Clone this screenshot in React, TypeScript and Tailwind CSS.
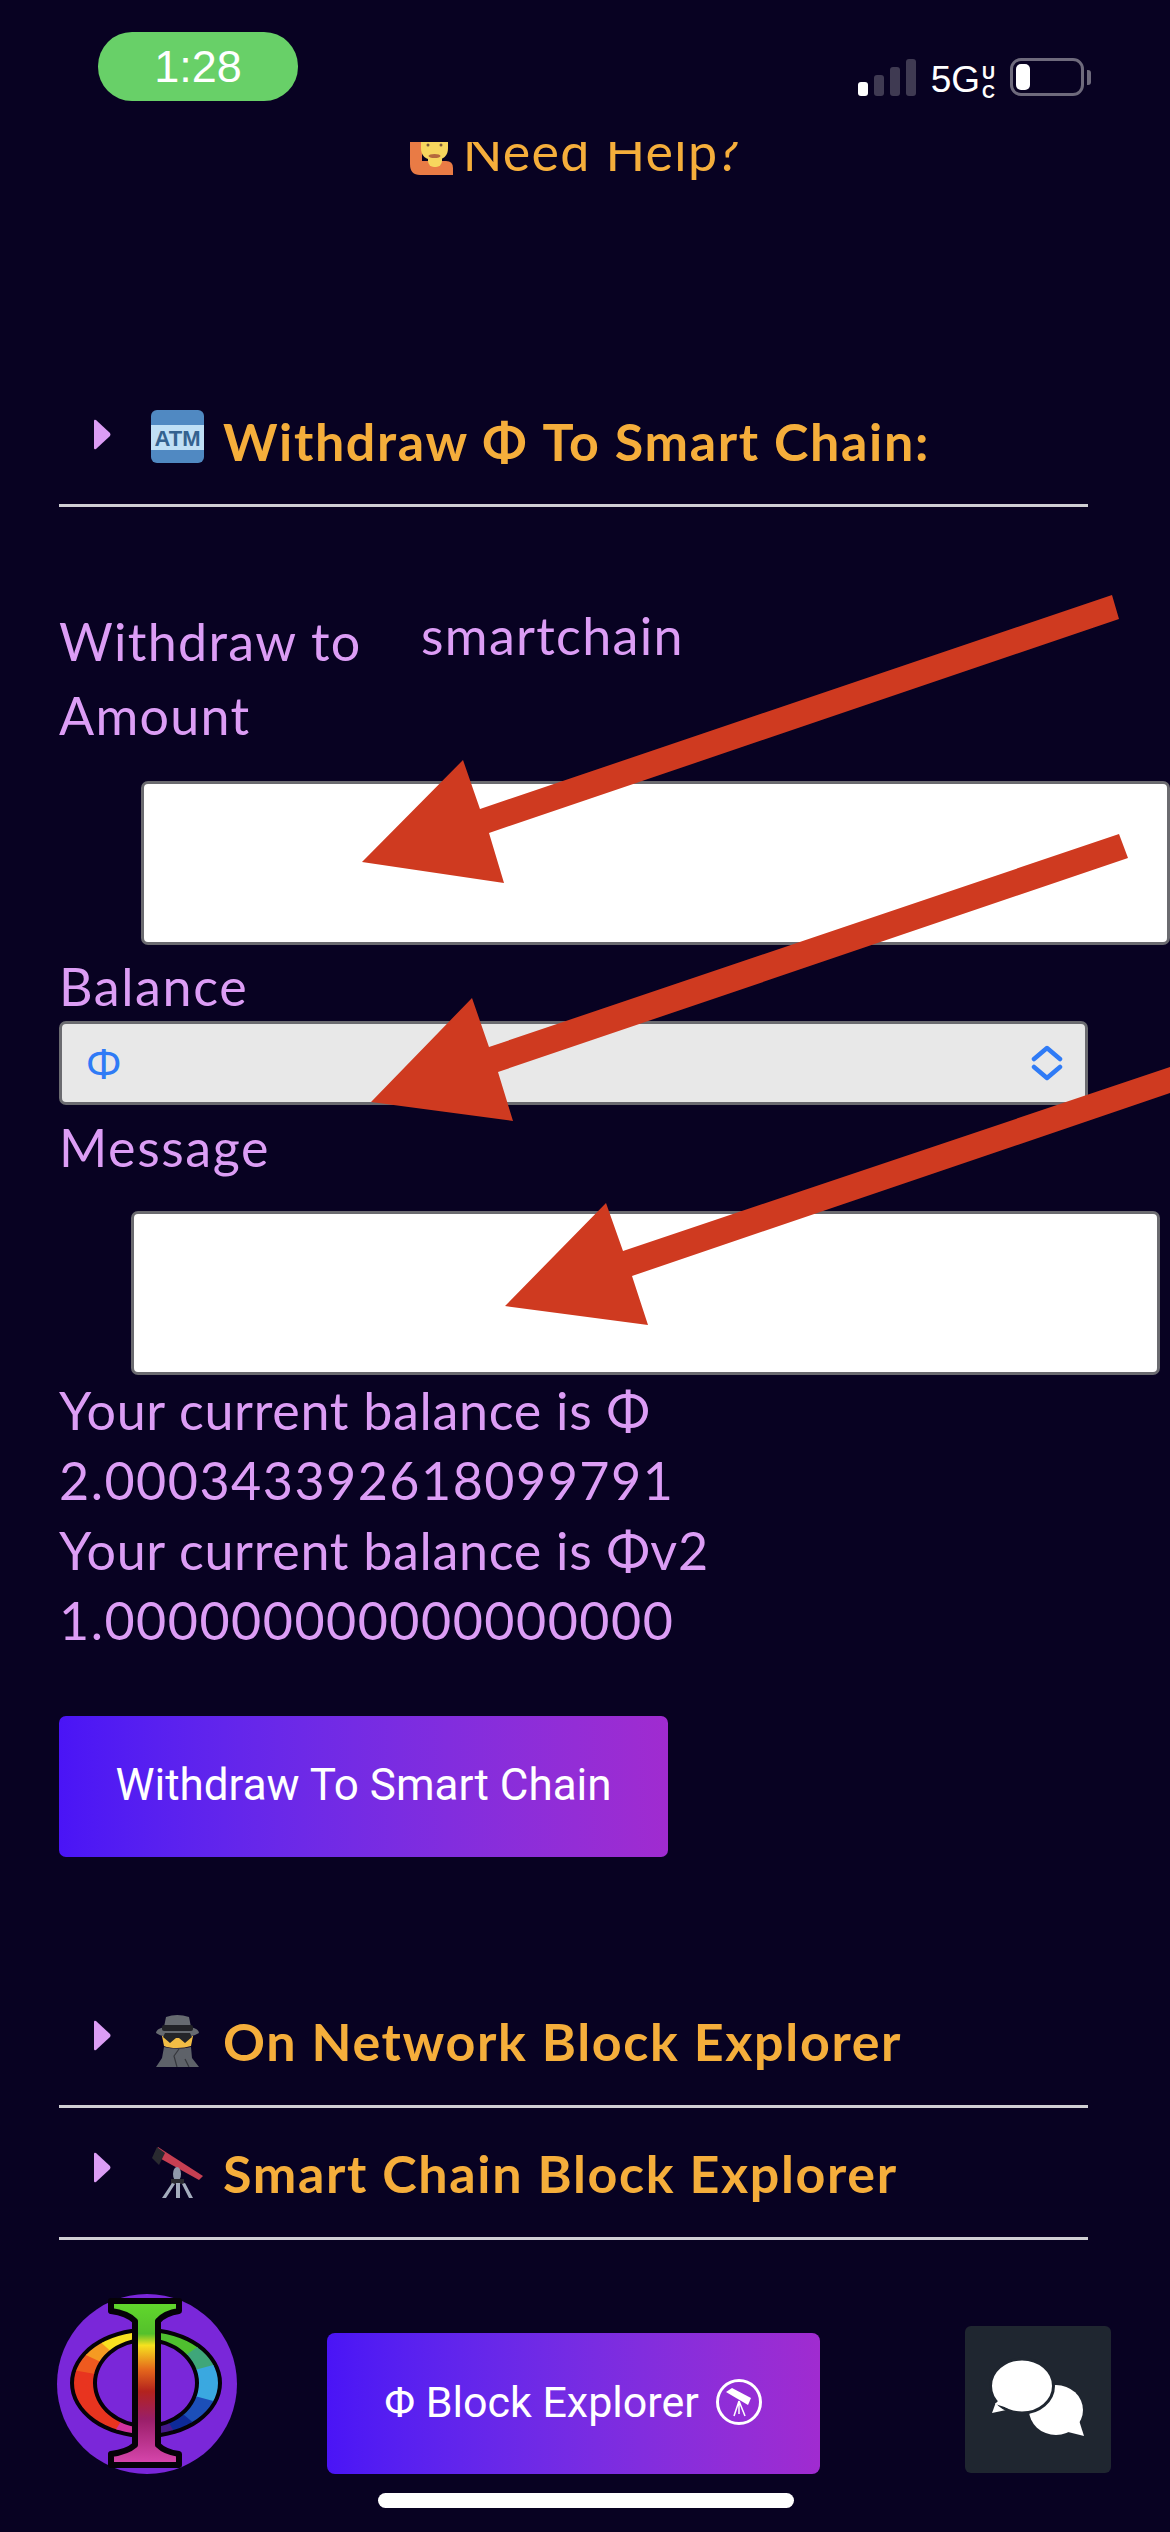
const nun = "font-['Lato','Noto_Sans',sans-serif]";

function Caret() {
  return (
    <svg width="17" height="31" viewBox="0 0 17 31" className="shrink-0">
      <path d="M0 2 Q0 0 2 1 L16 14 Q17 15.5 16 17 L2 30 Q0 31 0 29 Z" fill="#dc9df5" />
    </svg>
  );
}

function AtmEmoji() {
  return (
    <svg width="53" height="53" viewBox="0 0 53 53" className="shrink-0">
      <rect width="53" height="53" rx="6" fill="#5089c2" />
      <rect y="15" width="53" height="25" fill="#bfdff5" />
      <text x="26.5" y="35.5" textAnchor="middle" fontFamily="Liberation Sans" fontWeight="700" fontSize="22" fill="#34628f">ATM</text>
    </svg>
  );
}

function SpyEmoji() {
  return (
    <svg width="45" height="53" viewBox="0 0 45 53" className="shrink-0">
      <path d="M11 3 Q22 -1 34 3 L36 13 Q44 15 44 19 Q36 24 22 24 Q8 24 1 19 Q1 15 9 13 Z" fill="#666a70" />
      <rect x="7" y="11" width="31" height="6" rx="2" fill="#222327" />
      <path d="M7 22 H38 L36 32 Q30 34 22 34 Q14 34 9 32 Z" fill="#f2bd45" />
      <path d="M8 23 L15 29 L21 24 L24 24 L30 29 L37 23 L35 19 H10 Z" fill="#232428" />
      <path d="M9 33 Q22 36 36 33 L37 44 L44 53 H1 L7 44 Z" fill="#5e6269" />
      <path d="M24 35 L19 42 L22 53 M30 45 L34 53" stroke="#35373c" strokeWidth="1.2" fill="none" />
    </svg>
  );
}

function ScopeEmoji() {
  return (
    <svg width="51" height="51" viewBox="0 0 51 51" className="shrink-0">
      <path d="M2 8 L6 0 L51 29 L47 33 Z" fill="#c63f52" />
      <path d="M0 11 L5 0 L13 6 L7 18 Z" fill="#292a30" />
      <ellipse cx="25" cy="27" rx="4" ry="7" fill="#8f99ab" />
      <rect x="19" y="32" width="13" height="5" fill="#292a30" />
      <path d="M20 36 L10 51 H14 L23 37 Z M24 36 H28 V51 H24 Z M30 37 L37 51 H41 L33 36 Z" fill="#a4adbd" />
    </svg>
  );
}

function AccordionRow({ icon, label, className, caretClass, iconClass }: { icon: React.ReactNode; label: string; className: string; caretClass: string; iconClass: string }) {
  return (
    <div className={`flex items-center border-b-[3px] border-[#cfcfd3] pl-[35px] ${className}`}>
      <div className={caretClass}>
        <Caret />
      </div>
      <div className={`ml-[40px] flex w-[53px] justify-center ${iconClass}`}>{icon}</div>
      <span className="ml-[19px] whitespace-nowrap text-[52px] font-bold leading-[60px] tracking-[1.65px] text-[#f5ae3b]">{label}</span>
    </div>
  );
}

function Phi() {
  const cx = 89, cy = 89;
  const wedges: [number, number, string][] = [
    [120, 190, "#e8341f"],
    [190, 205, "#ee5a1f"],
    [205, 222, "#f59a22"],
    [222, 262, "#f8e021"],
    [275, 325, "#4fc02f"],
    [325, 345, "#3fa67a"],
    [345, 375, "#3aa8e0"],
    [375, 400, "#1c4fb8"],
    [400, 420, "#0d2a98"],
    [420, 445, "#451a8c"],
    [445, 462, "#8a1f9a"],
    [462, 482, "#d0329f"],
  ];
  return (
    <svg width="180" height="180" viewBox="0 0 180 180">
      <defs>
        <linearGradient id="barG" x1="0" y1="0" x2="0" y2="1">
          <stop offset="0" stopColor="#62d92c" />
          <stop offset="0.2" stopColor="#55c02c" />
          <stop offset="0.27" stopColor="#f6e21f" />
          <stop offset="0.42" stopColor="#e4661c" />
          <stop offset="0.55" stopColor="#b3231d" />
          <stop offset="0.72" stopColor="#9a1e68" />
          <stop offset="1" stopColor="#d948b0" />
        </linearGradient>
        <clipPath id="ringClip">
          <path
            clipRule="evenodd"
            d="M17 89 a72 51 0 1 0 144 0 a72 51 0 1 0 -144 0 Z M36 89 a53 45 0 1 0 106 0 a53 45 0 1 0 -106 0 Z"
          />
        </clipPath>
      </defs>
      <circle cx="90" cy="90" r="90" fill="#7a27d9" />
      <path
        fillRule="evenodd"
        fill="#050208"
        d="M13 89 a76 55 0 1 0 152 0 a76 55 0 1 0 -152 0 Z M40 89 a49 41 0 1 0 98 0 a49 41 0 1 0 -98 0 Z"
      />
      <g clipPath="url(#ringClip)">
        {wedges.map(([a, b, c], i) => {
          const a0 = (a * Math.PI) / 180;
          const a1 = ((b + 1) * Math.PI) / 180;
          const d = `M${cx} ${cy} L${cx + 120 * Math.cos(a0)} ${cy + 120 * Math.sin(a0)} L${cx + 120 * Math.cos(a1)} ${cy + 120 * Math.sin(a1)} Z`;
          return <path key={i} d={d} fill={c} />;
        })}
      </g>
      <path
        d="M54 7 H122 V17 Q108 19 101 27 V151 Q108 158 122 160 V171 H54 V160 Q70 158 78 151 V27 Q70 19 54 17 Z"
        fill="url(#barG)"
        stroke="#050208"
        strokeWidth="6"
        strokeLinejoin="round"
      />
    </svg>
  );
}

export default function App() {
  return (
    <div className={`relative h-[2532px] w-[1170px] overflow-hidden bg-[#080222] ${nun}`}>
      {/* status bar */}
      <div className="flex h-[142px] items-start font-['Liberation_Sans',sans-serif] text-white">
        <div className="ml-[98px] mt-[32px] flex h-[69px] w-[200px] items-center justify-center rounded-[34px] bg-[#68d068] text-[45px]">1:28</div>
        <div className="ml-auto mr-[79px] mt-[58px] flex items-start">
          <div className="mt-[1px] flex items-end gap-[6px]">
            <div className="h-[14px] w-[10px] rounded-[3px] bg-white" />
            <div className="h-[21px] w-[10px] rounded-[3px] bg-[#3f3a52]" />
            <div className="h-[29px] w-[10px] rounded-[3px] bg-[#3f3a52]" />
            <div className="h-[37px] w-[10px] rounded-[3px] bg-[#3f3a52]" />
          </div>
          <span className="ml-[15px] mt-[4px] text-[37px] leading-[36px]">5G</span>
          <div className="ml-[2px] mt-[6px] flex flex-col text-[18px] font-bold leading-[19px]">
            <span>U</span>
            <span>C</span>
          </div>
          <div className="ml-[15px] flex h-[38px] w-[74px] items-center rounded-[11px] border-[3px] border-[#6e6a7c] px-[3px]">
            <div className="h-[26px] w-[14px] rounded-[5px] bg-white" />
          </div>
          <div className="ml-[3px] mt-[12px] h-[15px] w-[4px] rounded-r-[3px] bg-[#6e6a7c]" />
        </div>
      </div>

      {/* help link, cut by the status bar as in the picture */}
      <div className="flex h-[44px] justify-center overflow-hidden pr-[19px]">
        <svg width="43" height="33" viewBox="0 0 43 33" className="shrink-0">
          <path d="M0 0 H12 V19 H36 Q43 19 43 26 V33 H10 Q0 33 0 22 Z" fill="#e97b45" />
          <rect x="18" y="10" width="14" height="15" rx="6" fill="#f7d65e" />
          <path d="M11 0 H38 V6 Q38 18 24.5 18 Q11 18 11 6 Z" fill="#f7d65e" />
          <circle cx="18" cy="3" r="1.5" fill="#7c5b3a" />
          <circle cx="31" cy="3" r="1.5" fill="#7c5b3a" />
          <ellipse cx="24.5" cy="14" rx="6" ry="2" fill="#b56a3d" />
        </svg>
        <span className="-mt-[21px] ml-[10px] whitespace-nowrap text-[52px] font-normal leading-[60px] tracking-[1.3px] text-[#f5ae3b]">Need Help?</span>
      </div>

      {/* page content */}
      <div className="ml-[59px] w-[1029px]">
        <AccordionRow icon={<AtmEmoji />} label="Withdraw Φ To Smart Chain:" caretClass="-mt-[14px]" iconClass="-mt-[10px]" className="mt-[224px] h-[97px] pb-[32px]" />

        <div className="mt-[99px] flex h-[70px] items-center text-[52px] font-normal tracking-[1.3px] text-[#dc9df5]">
          <span className="w-[362px] whitespace-nowrap">Withdraw to</span>
          <span className="-mt-[12px] whitespace-nowrap">smartchain</span>
        </div>
        <div className="mt-[4px] h-[70px] text-[52px] font-normal leading-[70px] tracking-[1.3px] text-[#dc9df5]">Amount</div>
        <input aria-label="Amount" className="ml-[82px] mt-[31px] block h-[164px] w-[1029px] rounded-[7px] border-[3px] border-[#6b6b70] bg-white" />

        <div className="mt-[6px] h-[70px] text-[52px] font-normal leading-[70px] tracking-[1.6px] text-[#dc9df5]">Balance</div>
        <div className="flex h-[84px] items-center justify-between rounded-[7px] border-[3px] border-[#6b6b70] bg-[#e8e8e8] pl-[24px] pr-[22px]">
          <span className="font-['Noto_Sans',sans-serif] text-[42px] leading-none text-[#2f7bf6]">Φ</span>
          <svg width="32" height="36" viewBox="0 0 32 36" fill="none" stroke="#2f7bf6" strokeWidth="4.5" strokeLinecap="round" strokeLinejoin="round">
            <path d="M3 14 L16 3 L29 14 M3 22 L16 33 L29 22" />
          </svg>
        </div>
        <div className="mt-[7px] h-[70px] text-[52px] font-normal leading-[70px] tracking-[1.6px] text-[#dc9df5]">Message</div>
        <input aria-label="Message" className="ml-[72px] mt-[29px] block h-[164px] w-[1029px] rounded-[7px] border-[3px] border-[#6b6b70] bg-white" />

        <div className="whitespace-nowrap text-[52px] font-normal leading-[70px] text-[#dc9df5]">
          <div className="tracking-[0.7px]">Your current balance is Φ</div>
          <div className="tracking-[1.5px]">2.000343392618099791</div>
          <div className="tracking-[0.7px]">Your current balance is Φv2</div>
          <div className="tracking-[1.5px]">1.000000000000000000</div>
        </div>

        <button className="mt-[61px] flex h-[141px] w-[609px] items-center justify-center rounded-[7px] bg-gradient-to-r from-[#4a14f6] to-[#a02bd0] pb-[3px] font-['Roboto',sans-serif] text-[44px] text-white">
          Withdraw To Smart Chain
        </button>

        <AccordionRow icon={<SpyEmoji />} label="On Network Block Explorer" caretClass="-mt-[10px]" iconClass="" className="mt-[119px] h-[132px]" />
        <AccordionRow icon={<ScopeEmoji />} label="Smart Chain Block Explorer" caretClass="-mt-[10px]" iconClass="" className="h-[132px]" />
      </div>

      {/* floating logo */}
      <div className="absolute left-[57px] top-[2294px]">
        <Phi />
      </div>

      {/* floating explorer button */}
      <button className="absolute left-[327px] top-[2333px] flex h-[141px] w-[493px] items-center justify-center rounded-[8px] bg-gradient-to-r from-[#4a14f6] to-[#a02bd0] pb-[3px] font-['Roboto',sans-serif] text-[43px] text-white">
        <span className="whitespace-nowrap">Φ Block Explorer</span>
        <svg width="48" height="48" viewBox="0 0 48 48" className="ml-[16px]" fill="none">
          <circle cx="24" cy="24" r="21.5" stroke="white" strokeWidth="3" />
          <path d="M11 14 L17 10 L36 20 L33 27 Z" fill="white" />
          <path d="M24 23 L19 38 M24 23 L30 38 M24 23 V36" stroke="white" strokeWidth="1.5" />
        </svg>
      </button>

      {/* floating chat */}
      <button aria-label="Chat" className="absolute left-[965px] top-[2326px] h-[147px] w-[146px] rounded-[6px] bg-[#1f2630]">
        <svg width="146" height="147" viewBox="0 0 146 147">
          <ellipse cx="91" cy="84" rx="27" ry="25" fill="white" />
          <path d="M119 110 L112 88 L99 105 Z" fill="white" />
          <path d="M27 87 L34 68 L46 83 Z" fill="white" />
          <ellipse cx="57" cy="60" rx="31.5" ry="27" fill="white" stroke="#1f2630" strokeWidth="3" />
          <path d="M30 78 L46 83 L36 72 Z" fill="white" />
        </svg>
      </button>

      {/* home indicator */}
      <div className="absolute left-[378px] top-[2493px] h-[15px] w-[416px] rounded-full bg-white" />

      {/* red annotation arrows */}
      <svg className="pointer-events-none absolute left-0 top-0" width="1170" height="2532" viewBox="0 0 1170 2532">
        <path d="M1112 595 L1119 619 L489 833 L504 883 L362 862 L463 760 L480 809 Z" fill="#cf3a20" />
        <path d="M1119 834 L1128 858 L498 1072 L513 1121 L371 1102 L472 998 L489 1047 Z" fill="#cf3a20" />
        <path d="M1170 1067 L1170 1093 L632 1276 L648 1325 L505 1306 L606 1203 L623 1251 Z" fill="#cf3a20" />
      </svg>
    </div>
  );
}
